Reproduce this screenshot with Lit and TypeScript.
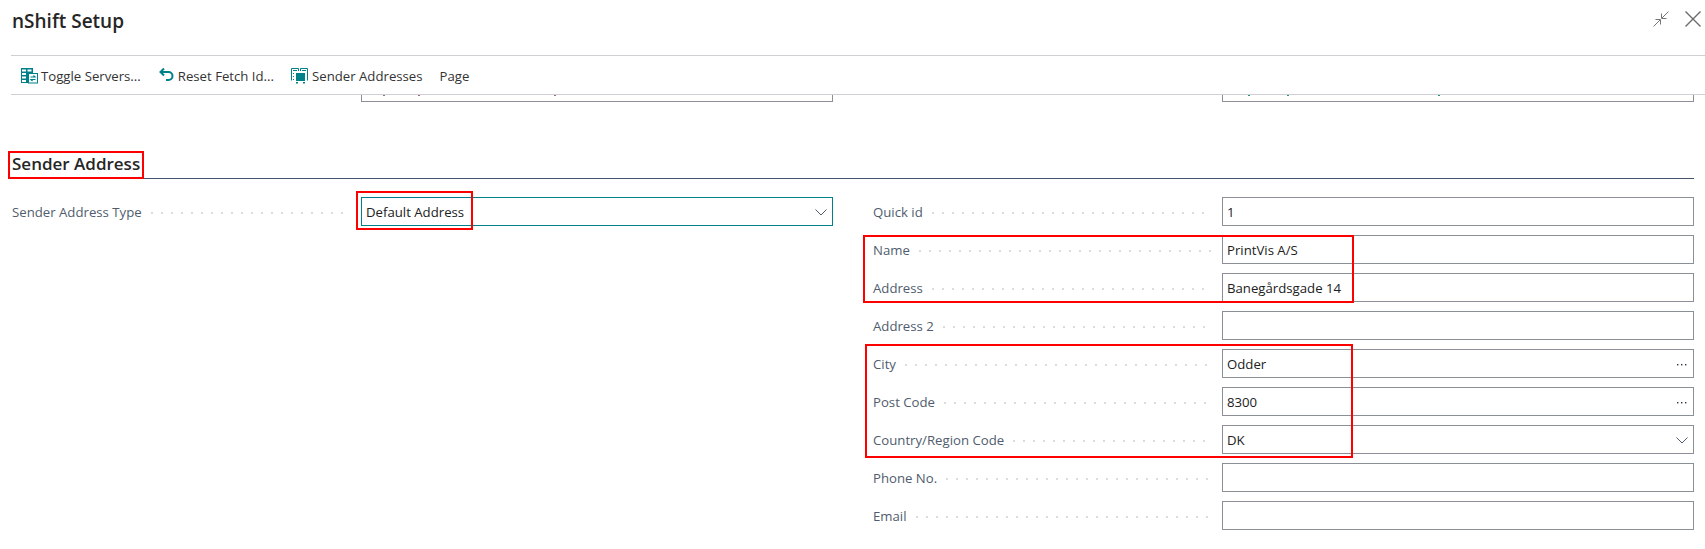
import { LitElement, html, css } from "lit";
import { customElement } from "lit/decorators.js";

const chevron = html`<svg class="aff" width="14" height="14" viewBox="0 0 14 14"><path d="M1.5 4.5 7 10l5.5-5.5" fill="none" stroke="#505c6d" stroke-width="1"/></svg>`;
const dots = html`<svg class="aff" width="14" height="14" viewBox="0 0 14 14"><g fill="#333"><rect x="2" y="7" width="1.4" height="1.4"/><rect x="6" y="7" width="1.4" height="1.4"/><rect x="10" y="7" width="1.4" height="1.4"/></g></svg>`;

type Row = { label: string; value?: string; aff?: "dots" | "chev" };
const rows: Row[] = [
  { label: "Quick id", value: "1" },
  { label: "Name", value: "PrintVis A/S" },
  { label: "Address", value: "Banegårdsgade 14" },
  { label: "Address 2" },
  { label: "City", value: "Odder", aff: "dots" },
  { label: "Post Code", value: "8300", aff: "dots" },
  { label: "Country/Region Code", value: "DK", aff: "chev" },
  { label: "Phone No." },
  { label: "Email" },
];

@customElement("app-root")
export class AppRoot extends LitElement {
  static styles = css`
    :host { display: block; width: 1705px; height: 549px; overflow: hidden; background: #fff; position: relative;
      font-family: "Open Sans", "Noto Sans", sans-serif; color: #212121; }
    .head { height: 55px; box-sizing: border-box; padding: 8px 4px 0 12px; display: flex; justify-content: space-between; }
    h1 { margin: 0; font-size: 19px; font-weight: 600; line-height: 26px; color: #262626; }
    .win { display: flex; gap: 16px; align-items: flex-start; padding-top: 3px; }
    .bar { margin-left: 11px; border-top: 1px solid #d0d0d4; border-bottom: 1px solid #d0d0d4; height: 38px; box-sizing: content-box; display: flex; align-items: center; gap: 17px; padding: 0 0 0 10px; font-size: 13.2px; color: #333; }
    .cmd { display: flex; align-items: center; gap: 3px; white-space: nowrap; }
    .cmd span { position: relative; top: 1px; }
    .cut { margin-left: 361px; display: grid; grid-template-columns: 472px 472px; column-gap: 389px; }
    .cut div { height: 6px; border: 1px solid #8a8f98; border-top: 0; background-repeat: no-repeat; background-size: 2px 1px; }
    .cut .a { background-image: linear-gradient(#9a6a8a, #9a6a8a), linear-gradient(#9a6a8a, #9a6a8a), linear-gradient(#9a6a8a, #9a6a8a); background-position: 21px 0, 56px 0, 192px 0; }
    .cut .b { background-image: linear-gradient(#2f8f7f, #2f8f7f), linear-gradient(#2f8f7f, #2f8f7f), linear-gradient(#2f8f7f, #2f8f7f); background-position: 25px 0, 64px 0, 215px 0; }
    .sec { margin: 49px 11px 0 11px; padding-left: 1px; height: 28px; border-bottom: 1px solid #44546a; box-sizing: border-box; font-size: 17px; font-weight: 600; line-height: 25px; color: #262626; }
    .cols { display: grid; grid-template-columns: 861px 1fr; margin: 18px 12px 0 12px; }
    .fld { display: grid; grid-template-columns: 349px 472px; height: 29px; align-items: center; font-size: 13.2px; }
    .right .fld { margin-bottom: 9px; }
    .lab { display: flex; align-items: center; color: #505c6d; white-space: nowrap; min-width: 0; }
    .lab i { flex: 1; margin: 2px 10px 0 9px; height: 2px;
      background: radial-gradient(circle at 1px 1px, #dcdcdc 1px, transparent 1.1px) 0 0 / 10px 2px repeat-x; }
    .inp { height: 29px; box-sizing: border-box; border: 1px solid #8a8f98; display: flex; align-items: center; justify-content: space-between; padding: 0 4px; color: #212121; }
    .inp.focus { border-color: #00818a; }
    .aff { display: block; }
    .hl { position: absolute; border: 2px solid #f00; box-sizing: border-box; pointer-events: none; }
    .h1 { left: 8px; top: 151px; width: 136px; height: 28px; }
    .h2 { left: 356px; top: 191px; width: 117px; height: 39px; }
    .h3 { left: 863px; top: 235px; width: 491px; height: 68px; }
    .h4 { left: 865px; top: 344px; width: 488px; height: 114px; }
  `;

  row(r: Row) {
    return html`<div class="fld"><div class="lab"><span>${r.label}</span><i></i></div>
      <div class="inp"><span>${r.value ?? ""}</span>${r.aff === "dots" ? dots : r.aff === "chev" ? chevron : ""}</div></div>`;
  }

  render() {
    return html`
      <div class="head"><h1>nShift Setup</h1>
        <div class="win">
          <svg width="16" height="16" viewBox="0 0 16 16" fill="none" stroke="#767676"><path d="M.5 15.500 7 9M2.500 8.500h5v5M15.500.5 9 7M8.500 2.500v5h5"/></svg>
          <svg width="16" height="16" viewBox="0 0 16 16" fill="none" stroke="#6a6a6a" stroke-width="1.400"><path d="M.5.5l15 15M15.500.5l-15 15"/></svg>
        </div>
      </div>
      <div class="bar">
        <div class="cmd"><svg width="17" height="17" viewBox="0 0 17 17"><path fill="#00818a" d="M0 1h12v5h-5v10H0z"/><path fill="#fff" d="M1 2.500h4v2H1zM6.500 2.500h4v2h-4zM1 6h4v2H1zM1 9.500h4v2H1zM1 13h4v2H1z"/><rect x="7.500" y="6.500" width="9" height="9.500" fill="#fff" stroke="#00818a"/><path fill="none" stroke="#00818a" stroke-width="1.200" d="M9.500 10H14l-1.500-1.500M14.500 12.500H10l1.500 1.500"/></svg><span>Toggle Servers...</span></div>
        <div class="cmd"><svg width="17" height="17" viewBox="0 0 17 17" fill="none" stroke="#00818a" stroke-width="2"><path d="M6 1.500 2.500 5 6 8.500"/><path d="M3 5h7.500a4 4 0 0 1 0 8H8"/></svg><span>Reset Fetch Id...</span></div>
        <div class="cmd"><svg width="18" height="17" viewBox="0 0 18 17"><path fill="none" stroke="#00818a" d="M.5 13.500V1.500h7v2.500M9.500 4V1.500h7v12"/><path fill="#00818a" d="M2 3h4v1H2zM11 3h4v1h-4zM2 6h1v1H2zM2 9h1v1H2zM2 12h1v1H2z"/><path fill="#00818a" d="M5 6h9v8H5zM5 15h2v1.500H5zM12 15h2v1.500h-2z"/></svg><span>Sender Addresses</span></div>
        <div class="cmd"><span>Page</span></div>
      </div>
      <div class="cut"><div class="a"></div><div class="b"></div></div>
      <div class="sec">Sender Address</div>
      <div class="cols">
        <div class="left">
          <div class="fld"><div class="lab"><span>Sender Address Type</span><i></i></div>
            <div class="inp focus"><span>Default Address</span>${chevron}</div></div>
        </div>
        <div class="right">${rows.map((r) => this.row(r))}</div>
      </div>
      <div class="hl h1"></div>
      <div class="hl h2"></div>
      <div class="hl h3"></div>
      <div class="hl h4"></div>
    `;
  }
}
